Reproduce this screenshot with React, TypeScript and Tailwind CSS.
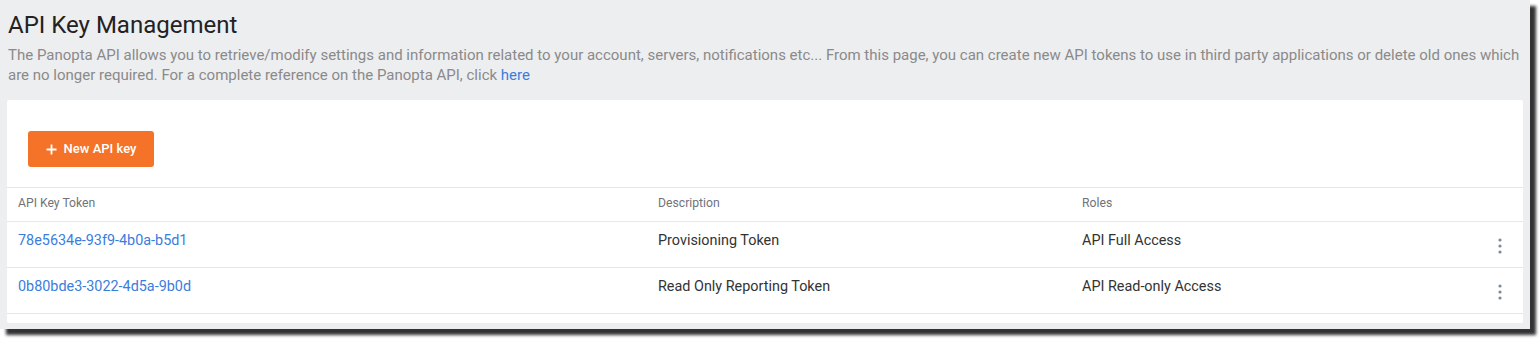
import React from 'react';

const keys = [
  { token: '78e5634e-93f9-4b0a-b5d1', description: 'Provisioning Token', roles: 'API Full Access' },
  { token: '0b80bde3-3022-4d5a-9b0d', description: 'Read Only Reporting Token', roles: 'API Read-only Access' },
];

const Kebab = () => (
  <svg width="4" height="16" viewBox="0 0 4 16" className="text-[#7d8b99]">
    <circle cx="2" cy="2" r="1.6" fill="currentColor" />
    <circle cx="2" cy="8" r="1.6" fill="currentColor" />
    <circle cx="2" cy="14" r="1.6" fill="currentColor" />
  </svg>
);

const App = () => {
  return (
    <div className="w-[1540px] h-[339px] bg-white font-['Roboto',_'Liberation_Sans',_sans-serif]">
      <div className="w-[1530px] h-[329px] bg-[#edeef0] shadow-[6px_6px_3px_rgba(0,0,0,0.8)] px-[7px] pt-[9px]">
        <h1 className="pl-px text-[24px] leading-[32px] text-[#222]">API Key Management</h1>
        <p className="mt-[4px] pl-px pr-[2px] text-[15px] leading-[20px] text-[#8a8a8a]">
          The Panopta API allows you to retrieve/modify settings and information related to your account, servers, notifications etc... From this page, you can create new API tokens to use in third party applications or delete old ones which are no longer required. For a complete reference on the Panopta API, click{' '}
          <a className="text-[#3b7ddd]">here</a>
        </p>

        <div className="mt-[15px] h-[223px] bg-white rounded-[2px]">
          <div className="pt-[31px] pb-[20px] pl-[21px]">
            <button className="flex items-center gap-[7px] h-[36px] w-[126px] justify-center rounded-[3px] bg-[#f47328] text-white text-[13px] font-medium">
              <svg width="11" height="11" viewBox="0 0 11 11">
                <path d="M5.5 0.5v10M0.5 5.5h10" stroke="white" strokeWidth="1.8" />
              </svg>
              New API key
            </button>
          </div>

          <div className="grid grid-cols-[651px_424px_1fr_46px] border-t border-[#e6e7e9] h-[34px] pb-[3px] items-center text-[12.2px] text-[#6f737a]">
            <div className="pl-[11px]">API Key Token</div>
            <div>Description</div>
            <div>Roles</div>
            <div />
          </div>

          {keys.map((k) => (
            <div
              key={k.token}
              className="grid grid-cols-[651px_424px_1fr_46px] border-t border-[#e6e7e9] h-[46px] text-[14.4px] text-[#333]"
            >
              <div className="pl-[11px] pt-[8px] text-[#3b7ddd]">{k.token}</div>
              <div className="pt-[8px]">{k.description}</div>
              <div className="pt-[8px]">{k.roles}</div>
              <div className="flex justify-center pt-[16px]">
                <Kebab />
              </div>
            </div>
          ))}
          <div className="border-t border-[#e6e7e9]" />
        </div>
      </div>
    </div>
  );
};

export default App;
